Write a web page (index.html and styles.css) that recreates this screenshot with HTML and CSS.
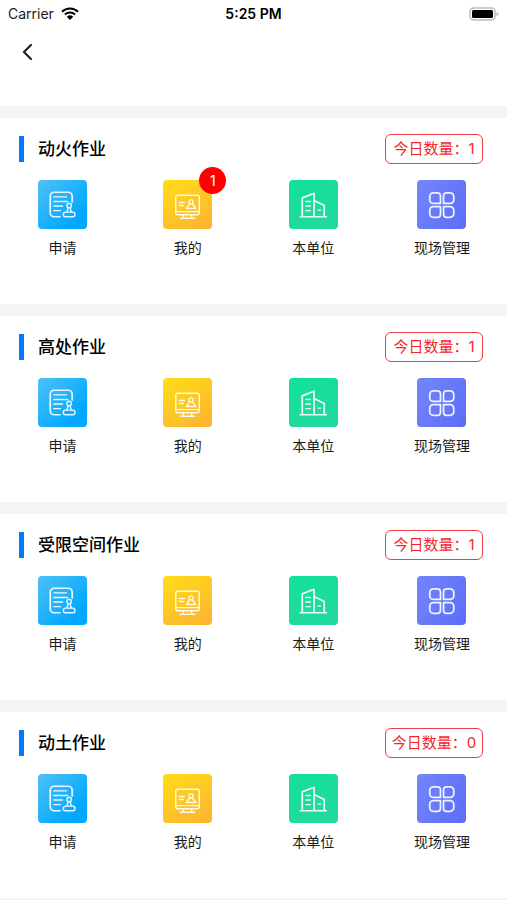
FILE: index.html
```
<!DOCTYPE html>
<html lang="zh-CN">
<head>
<meta charset="utf-8">
<meta name="viewport" content="width=device-width, initial-scale=1">
<title>作业</title>
<link rel="stylesheet" href="styles.css">
</head>
<body>
<svg class="sprite" aria-hidden="true">
  <symbol id="i-apply" viewBox="0 0 48 48">
    <path d="M33.500 21.500V16a4 4 0 0 0-4-4H16a4 4 0 0 0-4 4v16a4 4 0 0 0 4 4h5.500" stroke-width="1.700"/>
    <path d="M15.500 16.500H28M15.500 21H29M15.500 25.500H24M15.500 30H22"/>
    <circle cx="30.500" cy="25" r="2.200"/>
    <path d="M29.500 27.500 28.300 31.500M31.500 27.500 32.700 31.500M27 31.500h7a2.200 2.200 0 0 1 0 4.500h-7a2.200 2.200 0 0 1 0-4.500z"/>
  </symbol>
  <symbol id="i-mine" viewBox="0 0 48 48">
    <rect x="12.500" y="15" width="23" height="19" rx="2"/>
    <path d="M12.500 31h23M20 34.500v2.500M28 34.500v2.500M17 37.500h14M16 22h5M16 25h4"/>
    <circle cx="27.500" cy="21.500" r="2"/>
    <path d="M26 23.500 22.800 28h9.400L29 23.500"/>
  </symbol>
  <symbol id="i-unit" viewBox="0 0 48 48">
    <path d="M11 36h25.500M13 36V17.500L24.500 13v23M24.500 20l10 5v11" stroke-width="1.700"/>
    <path d="M16.500 21H21M16.500 25.500H21M16.500 30H21M28.500 29.500H31"/>
  </symbol>
  <symbol id="i-manage" viewBox="0 0 48 48">
    <path d="M16 12.500H20a3 3 0 0 1 3 3V23h-7a3.500 3.500 0 0 1-3.500-3.500V16a3.500 3.500 0 0 1 3.500-3.500zM29 12.500h3.500A3.500 3.500 0 0 1 36 16v3.500a3.500 3.500 0 0 1-3.500 3.500H26v-7.500a3 3 0 0 1 3-3zM16 26H23v7.500a3 3 0 0 1-3 3h-4a3.500 3.500 0 0 1-3.500-3.500v-3.500A3.500 3.500 0 0 1 16 26zM26 26h6.500a3.500 3.500 0 0 1 3.500 3.500V33a3.500 3.500 0 0 1-3.500 3.500H29a3 3 0 0 1-3-3z" stroke-width="1.700"/>
  </symbol>
</svg>

<div class="status">
  <div class="carrier">Carrier
    <svg class="wifi" viewBox="0 0 18 13" aria-hidden="true"><path d="M1 4.700a11.500 11.500 0 0 1 16 0M3.900 7.600a7.500 7.500 0 0 1 10.200 0"/><path class="dot" d="M9 13 5.800 9.700a4.700 4.700 0 0 1 6.400 0z"/></svg>
  </div>
  <div class="time">5:25 PM</div>
  <div class="battery"><svg viewBox="0 0 30 14" aria-hidden="true"><rect x="1" y="1" width="25" height="12" rx="3.500" fill="#fff" stroke="#bcbcbc" stroke-width="1.500"/><rect x="3" y="3" width="21" height="8" rx="1.500"/><path d="M27.500 5v4q2-.5 2-2t-2-2z" fill="#bcbcbc"/></svg></div>
</div>
<header class="nav">
  <button class="back" type="button" aria-label="返回"><svg viewBox="0 0 12 18" aria-hidden="true"><path d="M10 2 3 9l7 7"/></svg></button>
</header>

<main class="list">
  <section class="card">
    <div class="head"><h2>动火作业</h2><span class="count">今日数量：1</span></div>
    <nav class="tiles">
      <a href="#"><span class="icon apply"><svg><use href="#i-apply"/></svg></span>申请</a>
      <a href="#"><span class="icon mine"><svg><use href="#i-mine"/></svg><span class="badge">1</span></span>我的</a>
      <a href="#"><span class="icon unit"><svg><use href="#i-unit"/></svg></span>本单位</a>
      <a href="#"><span class="icon manage"><svg><use href="#i-manage"/></svg></span>现场管理</a>
    </nav>
  </section>
  <section class="card">
    <div class="head"><h2>高处作业</h2><span class="count">今日数量：1</span></div>
    <nav class="tiles">
      <a href="#"><span class="icon apply"><svg><use href="#i-apply"/></svg></span>申请</a>
      <a href="#"><span class="icon mine"><svg><use href="#i-mine"/></svg></span>我的</a>
      <a href="#"><span class="icon unit"><svg><use href="#i-unit"/></svg></span>本单位</a>
      <a href="#"><span class="icon manage"><svg><use href="#i-manage"/></svg></span>现场管理</a>
    </nav>
  </section>
  <section class="card">
    <div class="head"><h2>受限空间作业</h2><span class="count">今日数量：1</span></div>
    <nav class="tiles">
      <a href="#"><span class="icon apply"><svg><use href="#i-apply"/></svg></span>申请</a>
      <a href="#"><span class="icon mine"><svg><use href="#i-mine"/></svg></span>我的</a>
      <a href="#"><span class="icon unit"><svg><use href="#i-unit"/></svg></span>本单位</a>
      <a href="#"><span class="icon manage"><svg><use href="#i-manage"/></svg></span>现场管理</a>
    </nav>
  </section>
  <section class="card">
    <div class="head"><h2>动土作业</h2><span class="count">今日数量：0</span></div>
    <nav class="tiles">
      <a href="#"><span class="icon apply"><svg><use href="#i-apply"/></svg></span>申请</a>
      <a href="#"><span class="icon mine"><svg><use href="#i-mine"/></svg></span>我的</a>
      <a href="#"><span class="icon unit"><svg><use href="#i-unit"/></svg></span>本单位</a>
      <a href="#"><span class="icon manage"><svg><use href="#i-manage"/></svg></span>现场管理</a>
    </nav>
  </section>
</main>
</body>
</html>
```
FILE: styles.css
```
* { box-sizing: border-box; }
body {
  margin: 0;
  background: #fff;
  color: #1a1a1a;
  font-family: Inter, "Noto Sans CJK SC", sans-serif;
  font-size: 14px;
}
.sprite { display: none; }
.status {
  display: grid;
  grid-template-columns: 1fr auto 1fr;
  align-items: center;
  height: 27px;
  padding: 0 8px;
}
.carrier { display: flex; align-items: center; gap: 7px; }
.wifi { width: 18px; height: 13px; fill: none; stroke: #000; stroke-width: 2; }
.wifi .dot { fill: #000; stroke: none; }
.time { font-weight: 600; color: #000; }
.battery { display: flex; justify-content: flex-end; }
.battery svg { width: 30px; height: 14px; }
.nav { display: flex; align-items: center; height: 50px; padding: 0 21px; }
.back { display: flex; padding: 0; border: 0; background: none; }
.back svg {
  width: 12px;
  height: 18px;
  fill: none;
  stroke: #222;
  stroke-width: 2.2;
  stroke-linecap: round;
}
.list {
  display: grid;
  gap: 12px;
  margin-top: 29px;
  padding: 12px 0;
  background: #f4f4f4;
}
.card { padding: 16px 24px 46px 19px; background: #fff; }
.head { display: flex; align-items: center; justify-content: space-between; height: 30px; }
h2 {
  margin: 0;
  padding-left: 14px;
  border-left: 5px solid #007aff;
  font-size: 17px;
  line-height: 26px;
  font-weight: 500;
  color: #000;
}
.count {
  width: 98px;
  border: 1px solid #ef3e42;
  border-radius: 6px;
  color: #f5262b;
  font-size: 15px;
  line-height: 28px;
  text-align: center;
  white-space: nowrap;
}
.tiles {
  display: flex;
  justify-content: space-between;
  padding: 16px 13px 0 19px;
}
.tiles a {
  display: flex;
  flex-direction: column;
  align-items: center;
  gap: 9px;
  color: #1a1a1a;
  line-height: 20px;
  text-decoration: none;
}
.icon { position: relative; width: 49px; height: 49px; border-radius: 4px; }
.icon svg {
  display: block;
  width: 100%;
  height: 100%;
  fill: none;
  stroke: #fff;
  stroke-opacity: 0.9;
  stroke-width: 1.4;
  stroke-linecap: round;
  stroke-linejoin: round;
}
.apply { background: linear-gradient(135deg, #4fc0f5, #00a8ff 80%); }
.mine { background: linear-gradient(150deg, #ffdd17, #fcb232); }
.unit { background: linear-gradient(150deg, #14e09a, #22d8a0); }
.manage { background: linear-gradient(120deg, #7486fc, #5b6df5); }
.badge {
  position: absolute;
  top: -13px;
  right: -14px;
  width: 27px;
  height: 27px;
  border-radius: 50%;
  background: #f00;
  color: #fff;
  line-height: 27px;
  text-align: center;
}
```
